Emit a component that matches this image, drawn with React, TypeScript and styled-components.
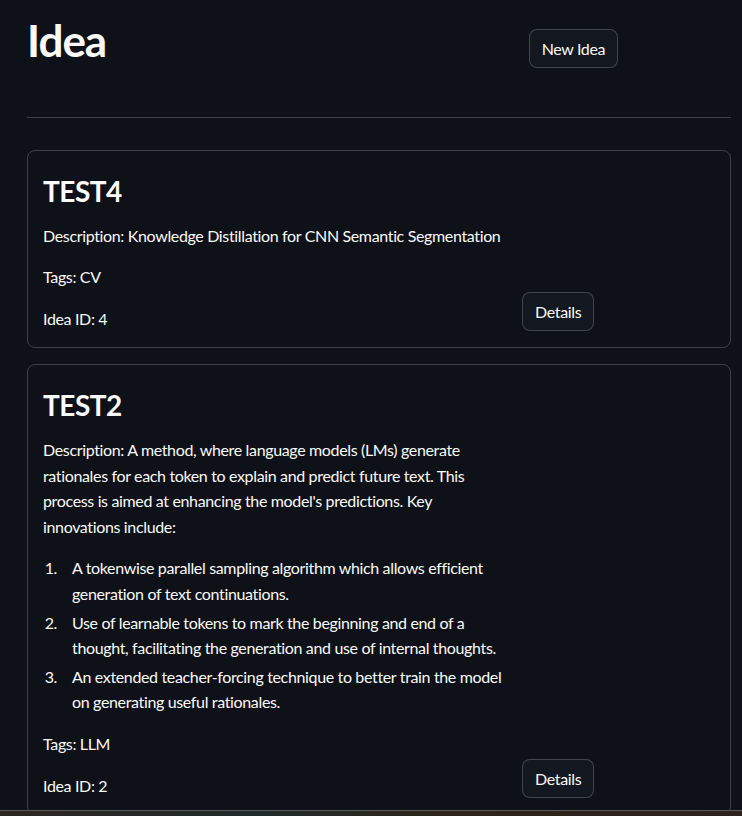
import styled, { createGlobalStyle } from 'styled-components';

const GlobalStyle = createGlobalStyle`
  html, body {
    margin: 0;
    padding: 0;
    background: #0e1117;
    color: #fafafa;
    font-family: Lato, "Noto Sans", sans-serif;
    letter-spacing: -0.35px;
    height: 100%;
    overflow: hidden;
  }
  * {
    box-sizing: border-box;
  }
`;

type Idea = {
  id: number;
  title: string;
  description: string;
  points?: string[];
  tags: string;
};

const ideas: Idea[] = [
  {
    id: 4,
    title: 'TEST4',
    description: 'Knowledge Distillation for CNN Semantic Segmentation',
    tags: 'CV',
  },
  {
    id: 2,
    title: 'TEST2',
    description:
      "A method, where language models (LMs) generate rationales for each token to explain and predict future text. This process is aimed at enhancing the model's predictions. Key innovations include:",
    points: [
      'A tokenwise parallel sampling algorithm which allows efficient generation of text continuations.',
      'Use of learnable tokens to mark the beginning and end of a thought, facilitating the generation and use of internal thoughts.',
      'An extended teacher-forcing technique to better train the model on generating useful rationales.',
    ],
    tags: 'LLM',
  },
];

const Main = styled.main`
  width: 704px;
  margin-left: 27px;
  padding-top: 14px;
`;

const Row = styled.div`
  display: grid;
  grid-template-columns: 2.4fr 1fr;
  gap: 16px;
  align-items: end;
`;

const HeaderRow = styled(Row)`
  align-items: start;
`;

const Title = styled.h1`
  margin: 0;
  font-size: 44px;
  font-weight: 700;
  line-height: 1.2;
  letter-spacing: -1px;
`;

const Button = styled.button`
  justify-self: start;
  min-height: 39px;
  padding: 4px 12px;
  border: 1px solid rgba(250, 250, 250, 0.2);
  border-radius: 8px;
  background: #131720;
  color: #fafafa;
  font-family: inherit;
  font-size: 16px;
  letter-spacing: -0.35px;
  line-height: 1.6;
  cursor: pointer;
`;

const HeaderButton = styled(Button)`
  margin-top: 15px;
`;

const Divider = styled.hr`
  margin: 49px 0 32px;
  border: none;
  border-bottom: 1px solid rgba(250, 250, 250, 0.2);
`;

const CardList = styled.div`
  display: flex;
  flex-direction: column;
  gap: 16px;
`;

const Card = styled.section`
  border: 1px solid rgba(250, 250, 250, 0.2);
  border-radius: 8px;
  padding: 16px 15px 16px;
`;

const CardTitle = styled.h3`
  margin: 0;
  padding: 8px 0 14px;
  font-size: 28px;
  font-weight: 700;
  line-height: 1.2;
  letter-spacing: -0.5px;
`;

const Text = styled.p`
  margin: 0 0 16px;
  font-size: 16px;
  line-height: 1.6;

  &:last-child {
    margin-bottom: 0;
  }
`;

const List = styled.ol`
  margin: 0 0 16px;
  padding-left: 29px;
  font-size: 16px;
  line-height: 1.6;

  li {
    margin-bottom: 3px;
  }
  li::marker {
    content: counter(list-item) ".    ";
  }
`;

const BottomBar = styled.div`
  position: fixed;
  left: 0;
  right: 0;
  bottom: 0;
  height: 6px;
  border-top: 1px solid #5b5b5b;
  background: linear-gradient(90deg, #2d2622 0%, #1f2a2b 35%, #2e2419 60%, #2b2220 100%);
`;

const IdeaCard = ({ idea }: { idea: Idea }) => (
  <Card>
    <Row>
      <div>
        <CardTitle>{idea.title}</CardTitle>
        <Text>Description: {idea.description}</Text>
        {idea.points && (
          <List>
            {idea.points.map((p) => (
              <li key={p}>{p}</li>
            ))}
          </List>
        )}
        <Text>Tags: {idea.tags}</Text>
        <Text>Idea ID: {idea.id}</Text>
      </div>
      <Button>Details</Button>
    </Row>
  </Card>
);

const App = () => (
  <>
    <GlobalStyle />
    <Main>
      <HeaderRow>
        <Title>Idea</Title>
        <HeaderButton>New Idea</HeaderButton>
      </HeaderRow>
      <Divider />
      <CardList>
        {ideas.map((idea) => (
          <IdeaCard key={idea.id} idea={idea} />
        ))}
      </CardList>
    </Main>
    <BottomBar />
  </>
);

export default App;
